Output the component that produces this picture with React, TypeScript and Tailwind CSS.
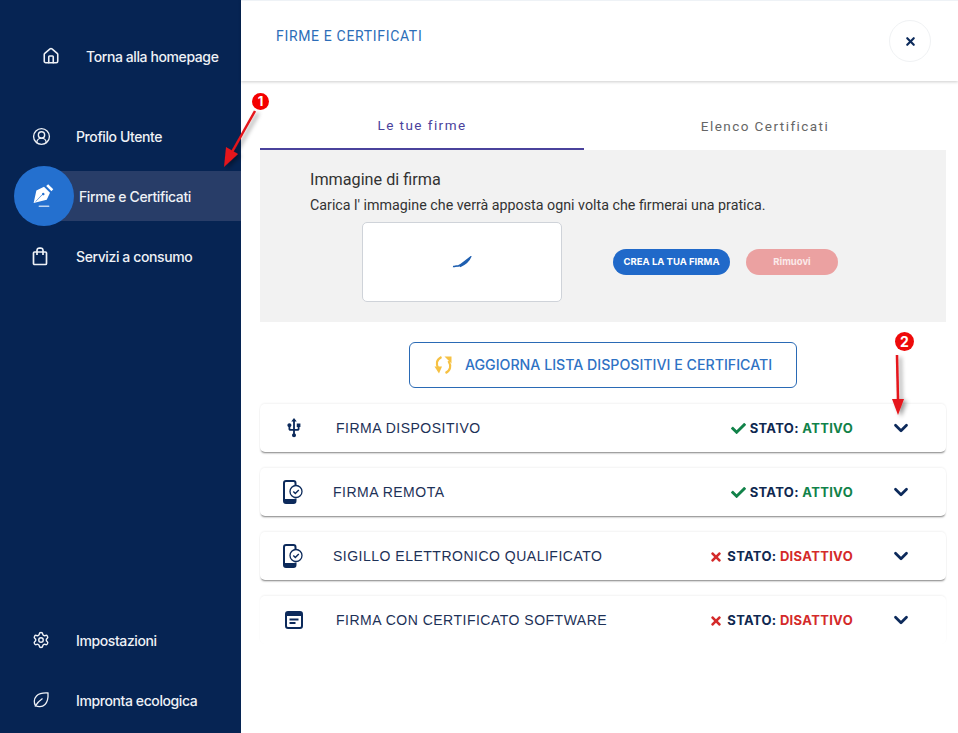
import type { ReactNode } from 'react';
import { ChevronDown, House, Settings, CircleUserRound, X } from 'lucide-react';
import { FaCheck, FaTimes } from 'react-icons/fa';
import { MdUsb } from 'react-icons/md';

function LeafIcon() {
  return (
    <svg width="18" height="18" viewBox="0 0 18 18" fill="none" stroke="currentColor" strokeWidth="1.3">
      <path d="M16 2C16 2 8 1.5 4.5 5C1.5 8 2 12.5 3.5 14.5C5.5 16 10 16.500 13 13.500C16.500 10 16 2 16 2Z" />
      <path d="M3 15.500C5 12 7.500 9.500 10.500 7.500" />
    </svg>
  );
}

function BagIcon() {
  return (
    <svg width="16" height="19" viewBox="0 0 16 19" fill="none" stroke="currentColor" strokeWidth="1.700">
      <rect x="1.500" y="5" width="13" height="12.500" rx="1" />
      <path d="M5 8V3A2 2 0 0 1 7 1.200H9A2 2 0 0 1 11 3V8" />
    </svg>
  );
}

function PenIcon() {
  return (
    <svg width="22" height="24" viewBox="0 0 20 22" fill="#fff">
      <path
        fillRule="evenodd"
        d="M0.500 17.500L3 6L10 2.500L15.500 8L12.500 14.500ZM9.300 8A1.200 1.200 0 1 0 9.310 8ZM2.400 16.300L8.200 10.200L7.900 9.900L2.100 16Z"
      />
      <path d="M12 1.800L13.800 0.200L18.500 4.800L16.800 6.600Z" />
      <rect x="5" y="19.800" width="10" height="1.300" rx="0.650" opacity="0.7" />
    </svg>
  );
}

function PhoneCheckIcon() {
  return (
    <svg width="20" height="24" viewBox="0 0 20 24" fill="none" className="text-[#0c2a5b]">
      <path
        d="M12.500 5V3A2 2 0 0 0 10.500 1H3A2 2 0 0 0 1 3V21A2 2 0 0 0 3 23H10.500A2 2 0 0 0 12.500 21V18.500"
        stroke="currentColor"
        strokeWidth="2"
      />
      <rect x="1" y="19" width="11.500" height="4" rx="1" fill="currentColor" />
      <circle cx="13" cy="11.500" r="6" stroke="currentColor" strokeWidth="1.300" />
      <path d="M10.300 11.500L12.300 13.500L15.800 9.900" stroke="currentColor" strokeWidth="1.400" />
    </svg>
  );
}

function SoftwareIcon() {
  return (
    <svg width="18" height="18" viewBox="0 0 18 18" fill="none" className="text-[#0c2a5b]">
      <rect x="1" y="1" width="16" height="16" rx="2" stroke="currentColor" strokeWidth="2" />
      <rect x="1" y="1" width="16" height="4" fill="currentColor" />
      <path d="M4.500 8.500H13.500M4.500 12H10.500" stroke="currentColor" strokeWidth="1.800" />
    </svg>
  );
}

function RefreshIcon() {
  return (
    <svg width="19" height="20" viewBox="0 0 19 20" fill="none" stroke="#f6c143" strokeWidth="2.200">
      <path d="M7.500 2C2.500 4.500 1.500 9 4.500 14" />
      <path d="M0.500 11.500L8 11.500L5 18.500Z" fill="#f6c143" stroke="none" />
      <path d="M11.500 18C16.500 15.500 17.500 11 14.500 6" />
      <path d="M10.500 1.500H17.500V8.500Z" fill="#f6c143" stroke="none" />
    </svg>
  );
}

function NavItem({ icon, label, iconLeft = 'pl-[32px]', gap = 'w-[44px]' }: { icon: ReactNode; label: string; iconLeft?: string; gap?: string }) {
  return (
    <div className={`flex h-[60px] items-center text-[14px] font-medium tracking-[-0.4px] text-[#eef1f6] ${iconLeft}`}>
      <span className={`flex shrink-0 ${gap}`}>{icon}</span>
      {label}
    </div>
  );
}

function Sidebar() {
  return (
    <aside className="flex h-[733px] w-[241px] shrink-0 flex-col justify-between bg-[#062453] pb-[3px] pt-[26px]">
      <div>
        <div className="mb-[20px]">
          <NavItem icon={<House size={18} strokeWidth={2.1} />} label="Torna alla homepage" iconLeft="pl-[42px]" />
        </div>
        <NavItem icon={<CircleUserRound size={19} strokeWidth={1.7} />} label="Profilo Utente" />
        <div className="relative flex h-[60px] items-center pl-[14px] text-[14px] font-medium tracking-[-0.4px] text-[#eef1f6]">
          <div className="absolute bottom-[5px] left-[50px] right-0 top-[5px] bg-[#283d68]" />
          <div className="relative flex h-[60px] w-[60px] items-center justify-center rounded-full bg-[#2470cf]">
            <PenIcon />
          </div>
          <span className="relative ml-[5px]">Firme e Certificati</span>
        </div>
        <NavItem icon={<BagIcon />} label="Servizi a consumo" />
      </div>
      <div>
        <NavItem icon={<Settings size={18} strokeWidth={1.9} />} label="Impostazioni" />
        <NavItem icon={<LeafIcon />} label="Impronta ecologica" />
      </div>
    </aside>
  );
}

type RowProps = {
  icon: ReactNode;
  title: string;
  active: boolean;
  textLeft: string;
  flat?: boolean;
};

function CertRow({ icon, title, active, textLeft, flat }: RowProps) {
  return (
    <div
      className={`flex h-[48px] items-center rounded-[5px] bg-white pr-[34px] ${
        flat
          ? 'shadow-[0_-1px_2px_rgba(0,0,0,0.05)]'
          : 'shadow-[0_2px_2px_-1px_rgba(0,0,0,0.5),0_-1px_2px_rgba(0,0,0,0.05)]'
      }`}
    >
      <span className={`flex shrink-0 justify-center ${textLeft}`}>{icon}</span>
      <span className="font-['Liberation_Sans',sans-serif] text-[14px] tracking-[0.5px] text-[#1d3157]">{title}</span>
      <span className="ml-auto flex items-center pt-[1px] text-[13px] font-bold tracking-[0.33px] text-[#0f2850]">
        {active ? (
          <FaCheck size={15} className="mr-[4px] text-[#118249]" />
        ) : (
          <FaTimes size={14} className="mr-[4px] text-[#d42a2a]" />
        )}
        STATO:&nbsp;
        <span className={active ? 'text-[#118249]' : 'text-[#d42a2a]'}>{active ? 'ATTIVO' : 'DISATTIVO'}</span>
      </span>
      <ChevronDown size={22} strokeWidth={3} className="ml-[37px] text-[#0c2a5b]" />
    </div>
  );
}

function Annotations() {
  return (
    <>
      <svg className="pointer-events-none absolute left-0 top-0" width="958" height="733" viewBox="0 0 958 733">
        <defs>
          <filter id="arrowShadow" x="-50%" y="-50%" width="200%" height="200%">
            <feDropShadow dx="3" dy="2" stdDeviation="2" floodColor="#000" floodOpacity="0.4" />
          </filter>
        </defs>
        <g filter="url(#arrowShadow)">
          <path d="M255 111L232 152" stroke="#e5141a" strokeWidth="2.500" />
          <path d="M224 167L226 147L238 154Z" fill="#e5141a" />
          <path d="M897 355L898 400" stroke="#e5141a" strokeWidth="2.500" />
          <path d="M898 415L892 399H904Z" fill="#e5141a" />
        </g>
      </svg>
      <span className="absolute left-[252px] top-[93px] flex h-[17px] w-[17px] items-center justify-center rounded-full bg-[#f40000] text-[13px] font-bold text-white">
        1
      </span>
      <span className="absolute left-[895px] top-[332px] flex h-[19px] w-[19px] items-center justify-center rounded-full bg-[#ee0a0a] text-[14px] font-bold text-white">
        2
      </span>
    </>
  );
}

export default function App() {
  return (
    <div className="relative flex h-[733px] w-[958px] overflow-hidden bg-white font-['Inter',sans-serif]">
      <Sidebar />
      <main className="flex-1">
        <header className="flex h-[81px] justify-between border-t border-[#eef2f6] pl-[35px] pr-[27px] pt-[26px] shadow-[0_1px_3px_rgba(0,0,0,0.2)]">
          <h1 className="font-['Roboto',sans-serif] text-[14px] leading-[18px] tracking-[0.67px] text-[#2c6db8]">FIRME E CERTIFICATI</h1>
          <button className="-mt-[7px] flex h-[42px] w-[42px] items-center justify-center rounded-full border border-[#f0f2f4] text-[#0c2a5b]">
            <X size={13} strokeWidth={4} />
          </button>
        </header>
        <div className="ml-[19px] mr-[12px]">
          <div className="flex h-[69px] font-['Roboto',sans-serif] text-[13.500px] tracking-[1.45px]">
            <div className="flex w-[324px] items-center justify-center border-b-2 border-[#4a429c] pt-[21px] text-[#4a429c]">Le tue firme</div>
            <div className="flex flex-1 items-center justify-center pt-[21px] text-[#666]">Elenco Certificati</div>
          </div>
          <section className="h-[172px] bg-[#f2f2f2] pl-[50px] pt-[20px] font-['Roboto',sans-serif]">
            <h2 className="text-[16.200px] leading-[20px] text-[#333]">Immagine di firma</h2>
            <p className="mt-[6px] text-[14.280px] leading-[18px] text-[#333]">Carica l' immagine che verrà apposta ogni volta che firmerai una pratica.</p>
            <div className="ml-[52px] mt-[8px] flex items-center font-['Inter',sans-serif]">
              <div className="flex h-[80px] w-[200px] items-center justify-center rounded-[5px] border border-[#cfd3d9] bg-white">
                <svg width="20" height="12" viewBox="0 0 20 12" fill="none">
                  <path d="M1 10.500C3 11 3.500 9.500 5 10C6 10.500 7 9.500 8 9C11 7 14.500 4 18.500 1C17 5 12.500 8.500 8 10.500" fill="#1f5fb0" stroke="#1f5fb0" strokeWidth="1.500" />
                </svg>
              </div>
              <button className="ml-[51px] h-[26px] w-[117px] rounded-full bg-[#2069c9] text-[9.500px] font-bold text-white">CREA LA TUA FIRMA</button>
              <button className="ml-[16px] h-[26px] w-[92px] rounded-full bg-[#eba1a1] text-[9.500px] font-bold text-[#fbeaea]">Rimuovi</button>
            </div>
          </section>
          <div className="flex justify-center pb-[16px] pt-[20px]">
            <button className="flex h-[46px] w-[388px] items-center justify-center gap-[12px] rounded-[6px] border border-[#2a6ab5] text-[14.200px] font-medium text-[#2f72c4]">
              <RefreshIcon />
              AGGIORNA LISTA DISPOSITIVI E CERTIFICATI
            </button>
          </div>
          <div className="flex flex-col gap-[16px]">
            <CertRow icon={<MdUsb size={22} className="text-[#0c2a5b]" />} title="FIRMA DISPOSITIVO" active textLeft="w-[76px] pr-[8px]" />
            <CertRow icon={<PhoneCheckIcon />} title="FIRMA REMOTA" active textLeft="w-[73px] pr-[8px]" />
            <CertRow icon={<PhoneCheckIcon />} title="SIGILLO ELETTRONICO QUALIFICATO" active={false} textLeft="w-[73px] pr-[8px]" />
            <CertRow icon={<SoftwareIcon />} title="FIRMA CON CERTIFICATO SOFTWARE" active={false} textLeft="w-[76px] pr-[8px]" flat />
          </div>
        </div>
      </main>
      <Annotations />
    </div>
  );
}
